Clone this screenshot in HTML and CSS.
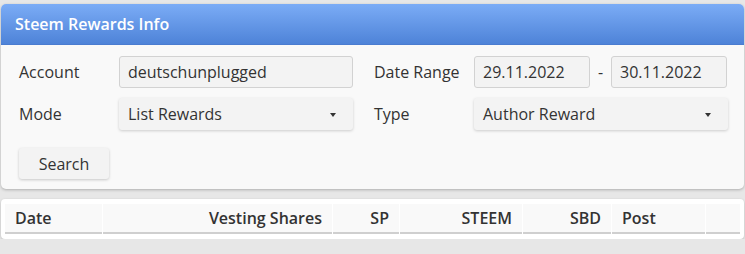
FILE: index.html
```html
<!DOCTYPE html>
<html>
<head>
<meta charset="utf-8">
<link rel="stylesheet" href="styles.css">
</head>
<body>
<div class="card">
  <div class="card-head">Steem Rewards Info</div>
  <div class="card-body">
    <div class="row">
      <div class="field">
        <span class="label">Account</span>
        <div class="input wide">deutschunplugged</div>
      </div>
      <div class="field">
        <span class="label">Date Range</span>
        <div class="input date">29.11.2022</div>
        <span class="dash">-</span>
        <div class="input date">30.11.2022</div>
      </div>
    </div>
    <div class="row">
      <div class="field">
        <span class="label">Mode</span>
        <div class="select wide">List Rewards<span class="caret"></span></div>
      </div>
      <div class="field">
        <span class="label">Type</span>
        <div class="select type">Author Reward<span class="caret"></span></div>
      </div>
    </div>
    <div class="actions">
      <button class="btn">Search</button>
    </div>
  </div>
</div>
<div class="table-card">
  <table class="tbl">
    <thead>
      <tr>
        <th class="c-date">Date</th>
        <th class="c-vest num">Vesting Shares</th>
        <th class="c-sp num">SP</th>
        <th class="c-steem num">STEEM</th>
        <th class="c-sbd num">SBD</th>
        <th class="c-post">Post</th>
        <th class="c-last"></th>
      </tr>
    </thead>
  </table>
</div>
</body>
</html>
```
FILE: styles.css
```css
html, body { margin: 0; padding: 0; }
body {
  background: #e7e7e7;
  font-family: "Open Sans", "Noto Sans", sans-serif;
  color: #333;
  font-size: 16px;
  padding: 4px 1px 0 1px;
}
.card {
  background: #f9f9f9;
  border-radius: 5px;
  box-shadow: 0 1px 3px rgba(0,0,0,0.25);
  overflow: hidden;
}
.card-head {
  height: 41px;
  box-sizing: border-box;
  padding: 9px 14px 0;
  background: linear-gradient(#7bacf6, #4e83d8);
  border-bottom: 1px solid #4a7cd0;
  color: #fff;
  font-size: 16px;
  font-weight: 600;
  line-height: 22px;
}
.card-body {
  padding: 11px 18px 10px 18px;
}
.row {
  display: flex;
  gap: 21px;
  margin-bottom: 10px;
}
.field {
  display: flex;
  align-items: center;
}
.label {
  width: 100px;
  flex: none;
  font-size: 16px;
}
.input, .select {
  box-sizing: border-box;
  height: 32px;
  line-height: 30px;
  padding: 0 8px;
  font-size: 16px;
  border-radius: 3px;
  background: #f3f3f3;
  color: #333;
}
.input {
  border: 1px solid #d2d2d2;
}
.select {
  border: 1px solid transparent;
  box-shadow: 0 1px 3px rgba(0,0,0,0.18);
  position: relative;
}
.wide { width: 234px; }
.date { width: 116px; }
.type { width: 254px; }
.dash {
  width: 21px;
  text-align: center;
}
.caret {
  position: absolute;
  right: 16px;
  top: 14px;
  width: 0;
  height: 0;
  border-left: 3px solid transparent;
  border-right: 3px solid transparent;
  border-top: 4px solid #333;
}
.actions {
  padding-top: 8px;
  display: flex;
}
.btn {
  width: 90px;
  height: 31px;
  border: none;
  border-radius: 3px;
  background: #f3f3f3;
  box-shadow: 0 1px 3px rgba(0,0,0,0.2);
  font-family: inherit;
  font-size: 16px;
  color: #333;
  padding: 0;
}
.table-card {
  margin-top: 10px;
  background: #fff;
  border-radius: 4px;
  box-shadow: 0 1px 3px rgba(0,0,0,0.2);
  padding: 5px 4px 5px 4px;
}
.tbl {
  border-collapse: separate;
  border-spacing: 1px 0;
  margin: 0 -1px;
  table-layout: fixed;
  width: calc(100% + 2px);
}
.tbl th {
  box-sizing: border-box;
  background: #f9f9f9;
  border-bottom: 2px solid #cfcfcf;
  height: 30px;
  padding: 0 10px;
  text-align: left;
  font-size: 16px;
  font-weight: 600;
  color: #333;
  white-space: nowrap;
}
.tbl th.num { text-align: right; }
.c-date { width: 97px; }
.c-vest { width: 229px; }
.c-sp { width: 66px; }
.c-steem { width: 122px; }
.c-sbd { width: 88px; }
.c-post { width: 93px; }
.c-last { width: 34px; }
```
